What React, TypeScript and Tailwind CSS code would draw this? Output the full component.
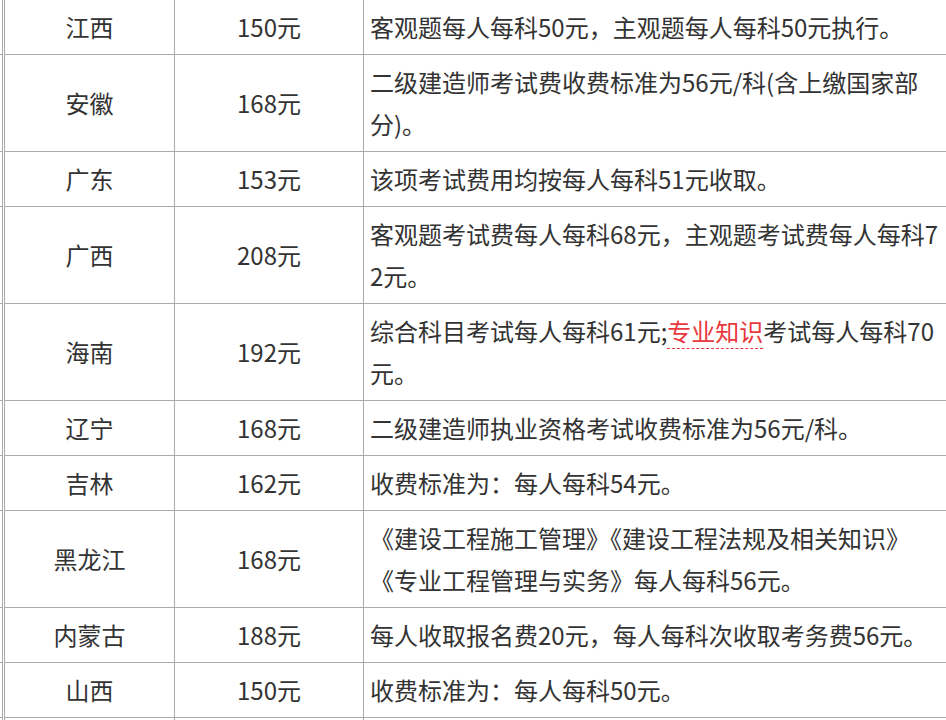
import React from 'react';

type Row = {
  province: string;
  fee: string;
  lines: React.ReactNode[];
};

const rows: Row[] = [
  { province: '江西', fee: '150元', lines: ['客观题每人每科50元，主观题每人每科50元执行。'] },
  { province: '安徽', fee: '168元', lines: ['二级建造师考试费收费标准为56元/科(含上缴国家部', '分)。'] },
  { province: '广东', fee: '153元', lines: ['该项考试费用均按每人每科51元收取。'] },
  { province: '广西', fee: '208元', lines: ['客观题考试费每人每科68元，主观题考试费每人每科7', '2元。'] },
  {
    province: '海南',
    fee: '192元',
    lines: [
      <>
        综合科目考试每人每科61元;
        <span className="text-[#e8383d] underline decoration-dashed decoration-[#e8383d] decoration-1 underline-offset-[7px]">
          专业知识
        </span>
        考试每人每科70
      </>,
      '元。',
    ],
  },
  { province: '辽宁', fee: '168元', lines: ['二级建造师执业资格考试收费标准为56元/科。'] },
  { province: '吉林', fee: '162元', lines: ['收费标准为：每人每科54元。'] },
  {
    province: '黑龙江',
    fee: '168元',
    lines: ['《建设工程施工管理》《建设工程法规及相关知识》', '《专业工程管理与实务》每人每科56元。'],
  },
  { province: '内蒙古', fee: '188元', lines: ['每人收取报名费20元，每人每科次收取考务费56元。'] },
  { province: '山西', fee: '150元', lines: ['收费标准为：每人每科50元。'] },
];

function FeeRow({ row }: { row: Row }) {
  return (
    <div className="flex">
      {/* outer frame lines */}
      <div className="w-[2px] shrink-0 border-b border-[#aaaaaa]" />
      <div className="w-px shrink-0 bg-[#aaaaaa]" />
      <div className="w-px shrink-0" />
      <div className="w-[171px] shrink-0 border-x border-b border-[#aaaaaa] flex items-center justify-center py-[6px]">
        {row.province}
      </div>
      <div className="w-[189px] shrink-0 border-r border-b border-[#aaaaaa] flex items-center justify-center py-[6px]">
        {row.fee}
      </div>
      <div className="w-[700px] shrink-0 border-b border-[#aaaaaa] pl-[6px] py-[6px] whitespace-nowrap">
        {row.lines.map((line, i) => (
          <div key={i}>{line}</div>
        ))}
      </div>
    </div>
  );
}

export default function App() {
  return (
    <div
      className="w-[946px] h-[720px] overflow-hidden bg-white text-[24px] leading-[42px] text-[#333333]"
      style={{ fontFamily: '"Noto Sans CJK SC", "Noto Sans", sans-serif' }}
    >
      {rows.map((row) => (
        <FeeRow key={row.province} row={row} />
      ))}
      <div className="flex h-[10px]">
        <div className="w-[2px] shrink-0" />
        <div className="w-px shrink-0 bg-[#aaaaaa]" />
        <div className="w-px shrink-0" />
        <div className="w-[171px] shrink-0 border-x border-[#aaaaaa]" />
        <div className="w-[189px] shrink-0 border-r border-[#aaaaaa]" />
      </div>
    </div>
  );
}
